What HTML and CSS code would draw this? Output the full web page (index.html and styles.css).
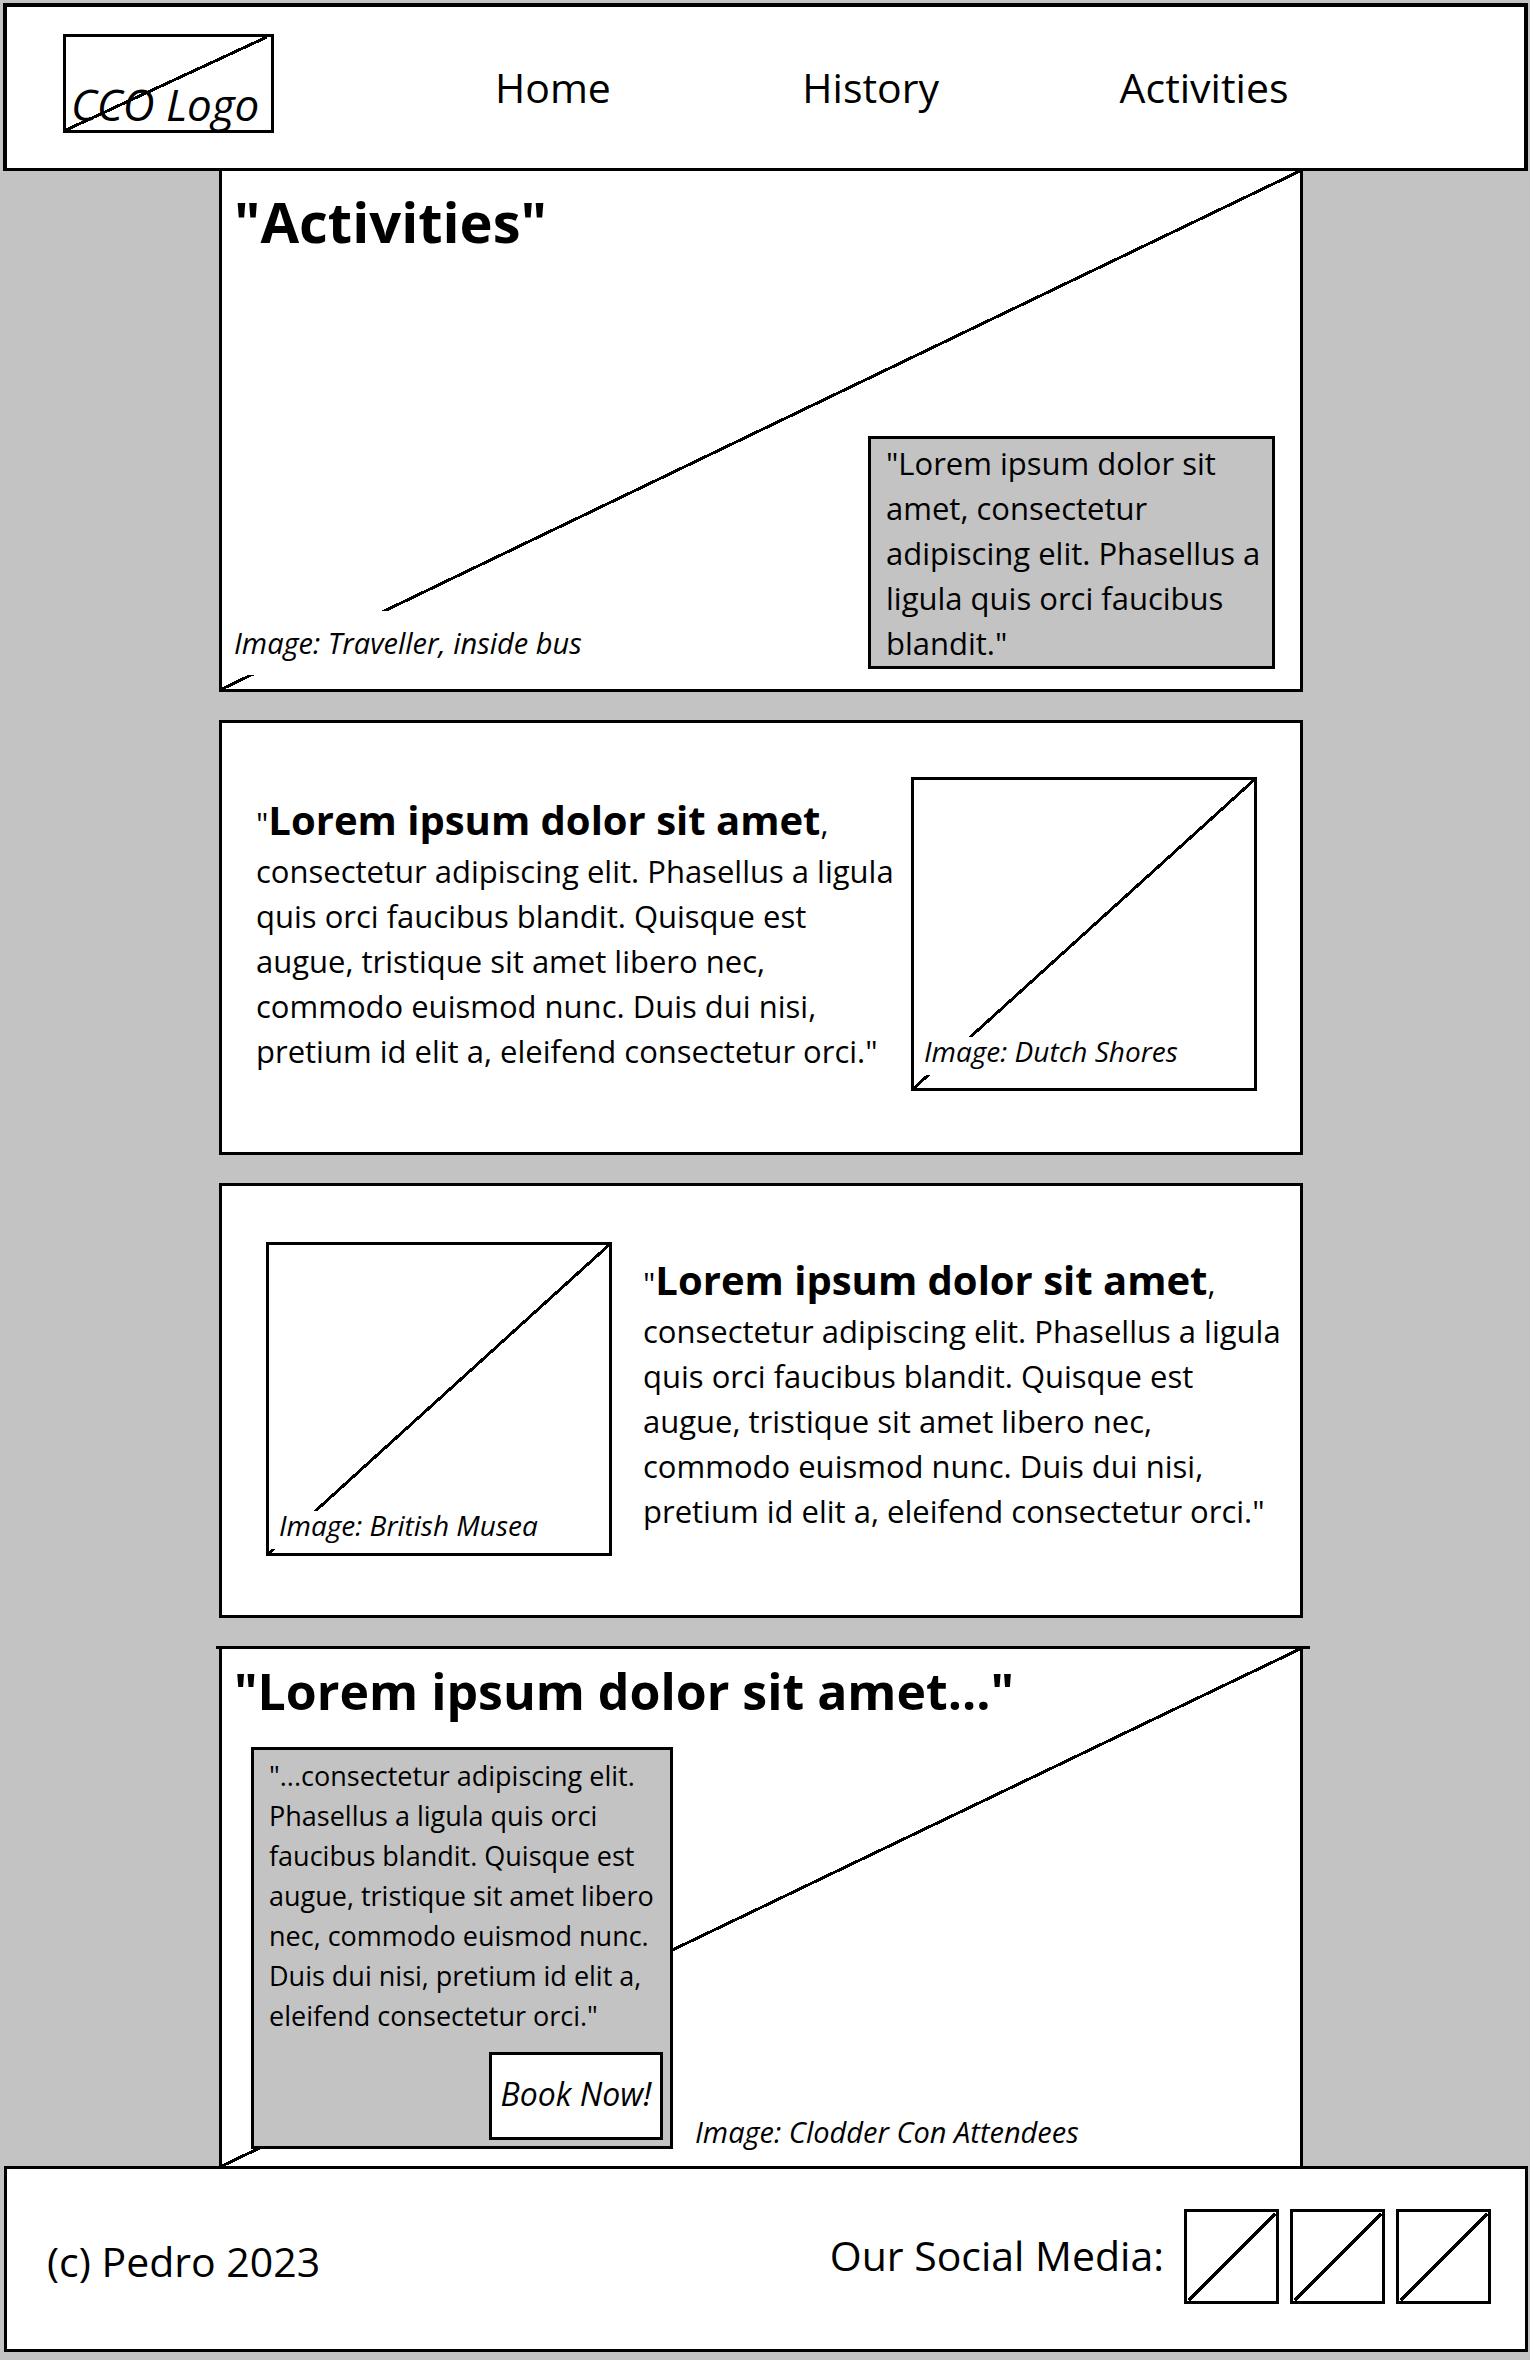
FILE: index.html
```html
<!DOCTYPE html>
<html lang="en">
<head>
<meta charset="utf-8">
<meta name="viewport" content="width=device-width, initial-scale=1">
<title>Activities</title>
<link rel="stylesheet" href="styles.css">
</head>
<body>
<header class="site-header">
  <a class="logo" href="#">
    <svg class="slash" viewBox="0 0 100 100" preserveAspectRatio="none" aria-hidden="true"><line x1="0" y1="100" x2="98" y2="0"/></svg>
    <span class="logo-text">CCO Logo</span>
  </a>
  <nav class="site-nav">
    <a href="#">Home</a>
    <a href="#">History</a>
    <a href="#">Activities</a>
  </nav>
</header>

<main class="content">
  <section class="hero">
    <svg class="slash" viewBox="0 0 100 100" preserveAspectRatio="none" aria-hidden="true"><line x1="0" y1="100" x2="100" y2="0"/></svg>
    <h1 class="hero-title">"Activities"</h1>
    <div class="hero-bottom">
      <p class="caption hero-caption">Image: Traveller, inside bus</p>
      <p class="hero-quote">"Lorem ipsum dolor sit<br>amet, consectetur<br>adipiscing elit. Phasellus a<br>ligula quis orci faucibus<br>blandit."</p>
    </div>
  </section>

  <section class="card card-image-right">
    <div class="card-text">
      <h2 class="card-lead"><span class="mark">"</span>Lorem ipsum dolor sit amet<span class="mark">,</span></h2>
      <p class="card-body">consectetur adipiscing elit. Phasellus a ligula<br>quis orci faucibus blandit. Quisque est<br>augue, tristique sit amet libero nec,<br>commodo euismod nunc. Duis dui nisi,<br>pretium id elit a, eleifend consectetur orci."</p>
    </div>
    <figure class="picture">
      <svg class="slash" viewBox="0 0 100 100" preserveAspectRatio="none" aria-hidden="true"><line x1="0" y1="100" x2="100" y2="0"/></svg>
      <figcaption class="caption picture-caption">Image: Dutch Shores</figcaption>
    </figure>
  </section>

  <section class="card card-image-left">
    <figure class="picture">
      <svg class="slash" viewBox="0 0 100 100" preserveAspectRatio="none" aria-hidden="true"><line x1="0" y1="100" x2="100" y2="0"/></svg>
      <figcaption class="caption picture-caption">Image: British Musea</figcaption>
    </figure>
    <div class="card-text">
      <h2 class="card-lead"><span class="mark">"</span>Lorem ipsum dolor sit amet<span class="mark">,</span></h2>
      <p class="card-body">consectetur adipiscing elit. Phasellus a ligula<br>quis orci faucibus blandit. Quisque est<br>augue, tristique sit amet libero nec,<br>commodo euismod nunc. Duis dui nisi,<br>pretium id elit a, eleifend consectetur orci."</p>
    </div>
  </section>

  <section class="booking">
    <svg class="slash" viewBox="0 0 100 100" preserveAspectRatio="none" aria-hidden="true"><line x1="0" y1="100" x2="100" y2="0"/></svg>
    <h2 class="booking-title">"Lorem ipsum dolor sit amet..."</h2>
    <div class="booking-row">
      <div class="booking-box">
        <p class="booking-text">"...consectetur adipiscing elit.<br>Phasellus a ligula quis orci<br>faucibus blandit. Quisque est<br>augue, tristique sit amet libero<br>nec, commodo euismod nunc.<br>Duis dui nisi, pretium id elit a,<br>eleifend consectetur orci."</p>
        <button class="book-button" type="button">Book Now!</button>
      </div>
      <p class="caption booking-caption">Image: Clodder Con Attendees</p>
    </div>
  </section>
</main>

<footer class="site-footer">
  <p class="copyright">(c) Pedro 2023</p>
  <div class="social">
    <span class="social-label">Our Social Media:</span>
    <div class="social-links">
      <a class="social-link" href="#" aria-label="Social media 1"><svg class="slash" viewBox="0 0 100 100" preserveAspectRatio="none" aria-hidden="true"><line x1="2" y1="99" x2="99" y2="2"/></svg></a>
      <a class="social-link" href="#" aria-label="Social media 2"><svg class="slash" viewBox="0 0 100 100" preserveAspectRatio="none" aria-hidden="true"><line x1="2" y1="99" x2="99" y2="2"/></svg></a>
      <a class="social-link" href="#" aria-label="Social media 3"><svg class="slash" viewBox="0 0 100 100" preserveAspectRatio="none" aria-hidden="true"><line x1="2" y1="99" x2="99" y2="2"/></svg></a>
    </div>
  </div>
</footer>
</body>
</html>
```
FILE: styles.css
```css
* {
  box-sizing: border-box;
}

body {
  margin: 0;
  padding: 3px 2px 8px 3px;
  background: #c3c3c3;
  color: #000;
  font-family: "Open Sans", "Noto Sans", sans-serif;
  font-size: 31px;
  line-height: 45px;
}

h1, h2, p, figure {
  margin: 0;
}

a {
  color: inherit;
  text-decoration: none;
}

/* Diagonal stroke that marks an image placeholder */
.slash {
  position: absolute;
  inset: 0;
  width: 100%;
  height: 100%;
}

.slash line {
  stroke: #000;
  stroke-width: 3px;
  vector-effect: non-scaling-stroke;
  shape-rendering: crispEdges;
}

.caption {
  font-size: 29px;
  font-style: italic;
  white-space: nowrap;
}

/* Header */
.site-header {
  display: flex;
  align-items: flex-start;
  padding: 27px 0 35px 56px;
  border: 4px solid #000;
  border-bottom-width: 3px;
  background: #fff;
}

.logo {
  position: relative;
  display: flex;
  align-items: flex-end;
  flex: none;
  width: 211px;
  height: 99px;
  padding-left: 5px;
  border: 3px solid #000;
  font-size: 44px;
  font-style: italic;
  line-height: 52px;
  white-space: nowrap;
}

.logo-text {
  position: relative;
}

.site-nav {
  display: grid;
  grid-template-columns: 307fr 317fr 404fr;
  flex: 1;
  margin-left: 221px;
  padding-top: 25px;
  font-size: 41px;
  line-height: 56px;
}

/* Main column */
.content {
  display: flex;
  flex-direction: column;
  gap: 28px;
  margin: 0 225px 0 216px;
}

.hero {
  position: relative;
  display: flex;
  flex-direction: column;
  justify-content: space-between;
  min-height: 521px;
  padding-top: 12px;
  border: 3px solid #000;
  border-top: 0;
  background: #fff;
}

.hero-title {
  position: relative;
  padding-left: 12px;
  font-size: 56px;
  line-height: 76px;
}

.hero-bottom {
  position: relative;
  display: flex;
  align-items: flex-end;
  justify-content: space-between;
  padding: 0 25px 14px 0;
}

.hero-caption {
  padding: 0 12px;
  background: #fff;
  line-height: 64px;
}

.hero-quote {
  width: 407px;
  margin-bottom: 6px;
  padding: 2px 0 0 15px;
  border: 3px solid #000;
  background: #c3c3c3;
}

/* Text and picture cards */
.card {
  display: flex;
  align-items: flex-start;
  border: 3px solid #000;
  background: #fff;
}

.card-image-right {
  justify-content: space-between;
  padding: 54px 43px 61px 34px;
}

.card-image-left {
  gap: 31px;
  padding: 56px 0 59px 44px;
}

.card-text {
  white-space: nowrap;
}

.card-image-right .card-text {
  padding-top: 17px;
}

.card-image-left .card-text {
  padding-top: 12px;
}

.card-lead {
  font-size: 40px;
  line-height: 52px;
}

.mark {
  font-size: 31px;
  font-weight: 400;
}

.picture {
  position: relative;
  display: flex;
  flex-direction: column;
  justify-content: flex-end;
  flex: none;
  width: 346px;
  height: 314px;
  border: 3px solid #000;
}

.card-image-right .picture {
  padding-bottom: 13px;
}

.card-image-left .picture {
  padding-bottom: 4px;
}

.picture-caption {
  position: relative;
  padding: 0 0 9px 10px;
  background: #fff;
  font-size: 28px;
  line-height: 29px;
}

/* Booking panel */
.booking {
  position: relative;
  padding: 8px 24px 17px 29px;
  border: 3px solid #000;
  border-bottom: 0;
  background: #fff;
}

/* The top rule runs a little past both sides */
.booking::before {
  content: "";
  position: absolute;
  top: -3px;
  left: -6px;
  right: -10px;
  height: 3px;
  background: #000;
}

.booking-title {
  position: relative;
  margin: 0 0 22px -17px;
  font-size: 50px;
  line-height: 68px;
}

.booking-row {
  position: relative;
  display: flex;
  align-items: flex-end;
  gap: 22px;
}

.booking-box {
  display: flex;
  flex-direction: column;
  width: 422px;
  padding: 6px 7px 6px 15px;
  border: 3px solid #000;
  background: #c3c3c3;
}

.booking-text {
  font-size: 27px;
  line-height: 40px;
  white-space: nowrap;
}

.book-button {
  align-self: flex-end;
  width: 174px;
  height: 88px;
  margin-top: 16px;
  padding: 0 0 4px;
  border: 3px solid #000;
  background: #fff;
  color: #000;
  font: italic 32px/40px "Open Sans", "Noto Sans", sans-serif;
}

.booking-caption {
  line-height: 34px;
}

/* Footer */
.site-footer {
  display: flex;
  align-items: center;
  justify-content: space-between;
  margin-left: 1px;
  padding: 40px 34px 45px 40px;
  border: 3px solid #000;
  background: #fff;
  font-size: 41px;
  line-height: 56px;
}

.copyright {
  padding-top: 8px;
}

.social {
  display: flex;
  align-items: center;
  gap: 20px;
}

.social-label {
  padding-bottom: 4px;
}

.social-links {
  display: flex;
  gap: 11px;
}

.social-link {
  position: relative;
  width: 95px;
  height: 95px;
  border: 3px solid #000;
}
```
